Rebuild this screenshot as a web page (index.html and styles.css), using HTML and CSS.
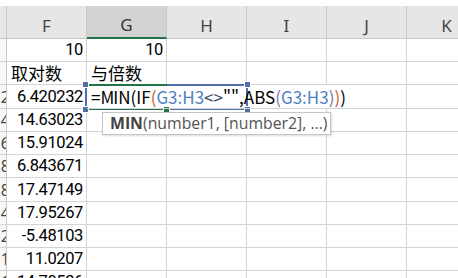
FILE: index.html
```html
<!DOCTYPE html>
<html lang="zh-CN">
<head>
  <meta charset="UTF-8">
  <title>Sheet</title>
  <link rel="stylesheet" href="styles.css">
</head>
<body>
  <div class="sheet">
    <div class="topband"></div>
    <div class="grid">
      <div class="hd corner"></div>
      <div class="hd">F</div>
      <div class="hd sel">G</div>
      <div class="hd">H</div>
      <div class="hd">I</div>
      <div class="hd">J</div>
      <div class="hd">K</div>

      <div class="rh"><span></span></div>
      <div class="c num">10</div><div class="c num">10</div><div class="c"></div><div class="c"></div><div class="c"></div><div class="c"></div>

      <div class="rh"><span></span></div>
      <div class="c">取对数</div><div class="c">与倍数</div><div class="c"></div><div class="c"></div><div class="c"></div><div class="c"></div>

      <div class="rh"><span>2</span></div>
      <div class="c num">6.420232</div>
      <div class="c formula">=M<i class="caret"></i>IN(IF<b class="p2">(</b><b class="ref">G3:H3</b><b class="op">&lt;&gt;</b>"",ABS<b class="p3">(</b><b class="ref">G3:H3</b><b class="p3">)</b><b class="p2">)</b>)</div>
      <div class="c"></div><div class="c"></div>

      <div class="rh"><span>4</span></div>
      <div class="c num">14.63023</div><div class="c"></div><div class="c"></div><div class="c"></div><div class="c"></div><div class="c"></div>

      <div class="rh"><span>6</span></div>
      <div class="c num">15.91024</div><div class="c"></div><div class="c"></div><div class="c"></div><div class="c"></div><div class="c"></div>

      <div class="rh"><span>8</span></div>
      <div class="c num">6.843671</div><div class="c"></div><div class="c"></div><div class="c"></div><div class="c"></div><div class="c"></div>

      <div class="rh"><span>8</span></div>
      <div class="c num">17.47149</div><div class="c"></div><div class="c"></div><div class="c"></div><div class="c"></div><div class="c"></div>

      <div class="rh"><span>4</span></div>
      <div class="c num">17.95267</div><div class="c"></div><div class="c"></div><div class="c"></div><div class="c"></div><div class="c"></div>

      <div class="rh"><span>2</span></div>
      <div class="c num">-5.48103</div><div class="c"></div><div class="c"></div><div class="c"></div><div class="c"></div><div class="c"></div>

      <div class="rh"><span>1</span></div>
      <div class="c num">11.0207</div><div class="c"></div><div class="c"></div><div class="c"></div><div class="c"></div><div class="c"></div>

      <div class="rh"><span>1</span></div>
      <div class="c num">14.70536</div><div class="c"></div><div class="c"></div><div class="c"></div><div class="c"></div><div class="c"></div>
    </div>

    <!-- reference range + active cell -->
    <div class="range"></div>
    <div class="active"></div>
    <i class="knob k1"></i><i class="knob k2"></i><i class="knob k3"></i><i class="knob k4"></i>
    <i class="knob fill"></i>

    <div class="tip"><b>MIN</b>(number1, [number2], ...)</div>
  </div>
</body>
</html>
```

FILE: styles.css
```css
body {
  margin: 0;
  background: #fff;
  font-family: "Noto Sans CJK SC", "Noto Sans", sans-serif;
  color: #000;
}

.sheet {
  position: relative;
  width: 458px;
  height: 278px;
  overflow: hidden;
}

.topband {
  height: 6px;
  background: #fff;
}

.grid {
  display: grid;
  grid-template-columns: 7px repeat(6, 80px);
  grid-template-rows: 33px 23px 23px 24px 23px 23px 23px 24px 23px 23px 23px 23px;
}

.hd {
  background: #e6e6e6;
  border-right: 1px solid #c8c8c8;
  border-bottom: 1px solid #c8c8c8;
  color: #444;
  font-family: "Noto Sans", sans-serif;
  font-size: 17px;
  display: flex;
  align-items: flex-end;
  justify-content: center;
  padding-bottom: 1px;
  box-sizing: border-box;
}

.hd.sel {
  background: #d3d3d3;
  border-bottom: 2px solid #217346;
  color: #333;
}

.rh {
  background: #f8f8f8;
  border-right: 1px solid #c8c8c8;
  border-bottom: 1px solid #d4d4d4;
  display: flex;
  justify-content: flex-end;
  align-items: flex-end;
  overflow: hidden;
  font-family: "Noto Sans", sans-serif;
  font-size: 16px;
  color: #444;
  box-sizing: border-box;
}

.rh span {
  margin-right: -4px;
  line-height: 21px;
}

.c {
  border-right: 1px solid #d4d4d4;
  border-bottom: 1px solid #d4d4d4;
  box-sizing: border-box;
  font-size: 17px;
  line-height: 22px;
  padding: 0 4px;
  white-space: nowrap;
  display: flex;
  align-items: flex-end;
}

.num {
  justify-content: flex-end;
  font-family: "Roboto", sans-serif;
  font-size: 16.5px;
  letter-spacing: -0.4px;
  line-height: 22px;
  padding-right: 3px;
}

.formula {
  grid-column: span 3;
  border-right: none;
  position: relative;
  z-index: 1;
  padding-left: 4px;
}

.formula b {
  font-weight: normal;
}

.ref { color: #4f7fc2; }
.op { color: #3b4a66; }
.p2 { color: #c8622a; }
.p3 { color: #8a6bb5; }

.caret {
  display: inline-block;
  width: 1px;
  height: 22px;
  background: #000;
  margin: 0 -1px 0 0;
  vertical-align: -5px;
}

.range {
  position: absolute;
  left: 85px;
  top: 84px;
  width: 163px;
  height: 26px;
  border: 2px solid #4f6fa8;
  box-sizing: border-box;
}

.active {
  position: absolute;
  left: 86px;
  top: 84px;
  width: 81px;
  height: 26px;
  border-top: 2px solid #217346;
  border-bottom: 2px solid #217346;
  box-sizing: border-box;
}

.knob {
  position: absolute;
  width: 5px;
  height: 5px;
  background: #4f6fa8;
  border: 1px solid #fff;
}

.k1 { left: 82px; top: 81px; }
.k2 { left: 244px; top: 81px; }
.k3 { left: 82px; top: 106px; }
.k4 { left: 244px; top: 106px; }
.fill { left: 163px; top: 106px; background: #217346; }

.tip {
  position: absolute;
  left: 102px;
  top: 112px;
  width: 229px;
  height: 23px;
  box-sizing: border-box;
  background: #fff;
  border: 1px solid #c6c6c6;
  box-shadow: 1px 1px 2px rgba(0, 0, 0, 0.15);
  font-family: "Open Sans", sans-serif;
  font-size: 15.8px;
  line-height: 20px;
  color: #555;
  padding-left: 7px;
  white-space: nowrap;
  z-index: 2;
}

.tip b {
  color: #444;
}
```
